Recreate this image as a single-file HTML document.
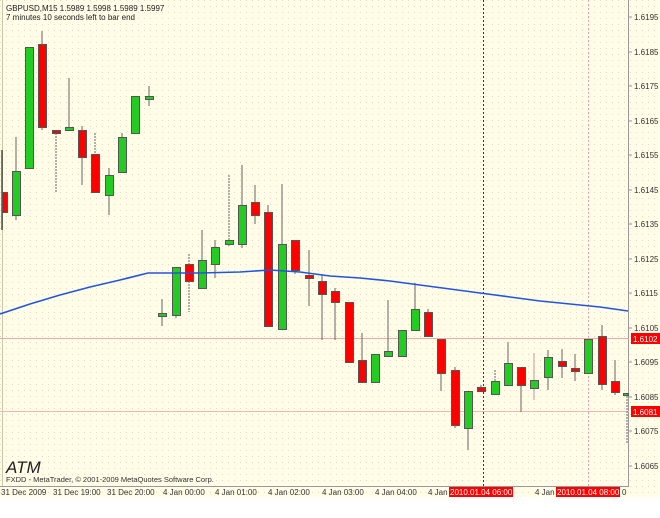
<!DOCTYPE html>
<html><head><meta charset="utf-8"><style>
body{margin:0;width:660px;height:513px;background:#fff;overflow:hidden;font-family:"Liberation Sans",sans-serif}
</style></head><body>
<svg width="660" height="513" xmlns="http://www.w3.org/2000/svg" font-family="Liberation Sans, sans-serif">
<defs><pattern id="dots" width="6" height="6" patternUnits="userSpaceOnUse"><rect width="6" height="6" fill="#fffce8"/><rect x="0" y="0" width="1" height="1" fill="#e8d8c0"/></pattern></defs>
<rect x="0" y="0" width="660" height="497" fill="url(#dots)"/>
<line x1="2.5" y1="0" x2="2.5" y2="486" stroke="#c8c8a8"/>
<line x1="628.5" y1="0" x2="628.5" y2="486" stroke="#999"/>
<line x1="0" y1="486.5" x2="629" y2="486.5" stroke="#999"/>
<!-- horizontal levels -->
<line x1="0" y1="338.5" x2="629" y2="338.5" stroke="#f0a8a8"/>
<line x1="0" y1="411.5" x2="629" y2="411.5" stroke="#f0b8b8"/>
<line x1="483.5" y1="0" x2="483.5" y2="486" stroke="#333" stroke-dasharray="2,2"/>
<line x1="588.5" y1="0" x2="588.5" y2="486" stroke="#f0a0b0" stroke-dasharray="2,2"/>
<g stroke="#666" stroke-width="1">
<line x1="2" y1="150" x2="2" y2="230" stroke="#000"/>
<line x1="16" y1="137" x2="16" y2="220"/><line x1="42" y1="31" x2="42" y2="130"/>
<line x1="56" y1="130" x2="56" y2="192" stroke-dasharray="2,1"/><line x1="69" y1="78" x2="69" y2="130"/>
<line x1="82" y1="126" x2="82" y2="185"/><line x1="95" y1="133" x2="95" y2="192" stroke-dasharray="2,1"/>
<line x1="109" y1="168" x2="109" y2="215"/><line x1="122" y1="133" x2="122" y2="172"/>
<line x1="149" y1="86" x2="149" y2="106"/>
<line x1="162" y1="299" x2="162" y2="326"/><line x1="176" y1="267" x2="176" y2="318"/>
<line x1="189" y1="254" x2="189" y2="312" stroke-dasharray="2,1"/><line x1="202" y1="230" x2="202" y2="288"/>
<line x1="215" y1="240" x2="215" y2="278"/><line x1="229" y1="175" x2="229" y2="247" stroke-dasharray="2,1"/>
<line x1="242" y1="165" x2="242" y2="248"/><line x1="255" y1="185" x2="255" y2="224"/>
<line x1="268" y1="205" x2="268" y2="326"/><line x1="282" y1="184" x2="282" y2="329"/>
<line x1="295" y1="240" x2="295" y2="274"/><line x1="309" y1="250" x2="309" y2="306"/>
<line x1="322" y1="274" x2="322" y2="340"/><line x1="335" y1="288" x2="335" y2="340"/>
<line x1="349" y1="302" x2="349" y2="362"/><line x1="362" y1="333" x2="362" y2="382"/>
<line x1="375" y1="354" x2="375" y2="382"/><line x1="388" y1="300" x2="388" y2="356"/>
<line x1="402" y1="330" x2="402" y2="356"/><line x1="415" y1="283" x2="415" y2="330"/>
<line x1="428" y1="309" x2="428" y2="337"/><line x1="441" y1="339" x2="441" y2="391"/>
<line x1="455" y1="367" x2="455" y2="428"/><line x1="468" y1="391" x2="468" y2="450"/>
<line x1="481" y1="385" x2="481" y2="392"/><line x1="495" y1="370" x2="495" y2="394" stroke-dasharray="2,1"/>
<line x1="508" y1="342" x2="508" y2="385"/><line x1="521" y1="367" x2="521" y2="412"/>
<line x1="534" y1="353" x2="534" y2="400" stroke="#c99"/><line x1="548" y1="350" x2="548" y2="390"/>
<line x1="562" y1="349" x2="562" y2="378"/><line x1="575" y1="354" x2="575" y2="381"/>
<line x1="602" y1="325" x2="602" y2="390"/><line x1="615" y1="360" x2="615" y2="395"/>
<line x1="627" y1="393" x2="627" y2="443" stroke-dasharray="2,1"/>
</g>
<g stroke="#555" stroke-width="1">
<rect x="2.5" y="192.5" width="5" height="20" fill="#f00"/>
<rect x="12.5" y="171.5" width="8" height="44" fill="#22cc22"/>
<rect x="25.5" y="47.5" width="8" height="121" fill="#22cc22"/>
<rect x="38.5" y="44.5" width="8" height="83" fill="#f00"/>
<rect x="52.5" y="130.5" width="8" height="3" fill="#f00"/>
<rect x="65.5" y="127.5" width="8" height="3" fill="#22cc22"/>
<rect x="78.5" y="130.5" width="8" height="27" fill="#f00"/>
<rect x="91.5" y="154.5" width="8" height="38" fill="#f00"/>
<rect x="105.5" y="175.5" width="8" height="20" fill="#22cc22"/>
<rect x="118.5" y="137.5" width="8" height="35" fill="#22cc22"/>
<rect x="131.5" y="96.5" width="8" height="37" fill="#22cc22"/>
<rect x="145.5" y="96.5" width="8" height="3" fill="#22cc22"/>
<rect x="158.5" y="313.5" width="8" height="3" fill="#22cc22"/>
<rect x="172.5" y="267.5" width="8" height="48" fill="#22cc22"/>
<rect x="185.5" y="264.5" width="8" height="17" fill="#f00"/>
<rect x="198.5" y="260.5" width="8" height="28" fill="#22cc22"/>
<rect x="211.5" y="247.5" width="8" height="17" fill="#22cc22"/>
<rect x="225.5" y="240.5" width="8" height="4" fill="#22cc22"/>
<rect x="238.5" y="205.5" width="8" height="39" fill="#22cc22"/>
<rect x="251.5" y="202.5" width="8" height="13" fill="#f00"/>
<rect x="264.5" y="212.5" width="8" height="114" fill="#f00"/>
<rect x="278.5" y="244.5" width="8" height="85" fill="#22cc22"/>
<rect x="291.5" y="240.5" width="8" height="30" fill="#f00"/>
<rect x="305.5" y="275.5" width="8" height="3" fill="#f00"/>
<rect x="318.5" y="281.5" width="8" height="13" fill="#f00"/>
<rect x="331.5" y="291.5" width="8" height="11" fill="#f00"/>
<rect x="345.5" y="302.5" width="8" height="60" fill="#f00"/>
<rect x="358.5" y="360.5" width="8" height="22" fill="#f00"/>
<rect x="371.5" y="354.5" width="8" height="28" fill="#22cc22"/>
<rect x="384.5" y="351.5" width="8" height="5" fill="#22cc22"/>
<rect x="398.5" y="330.5" width="8" height="26" fill="#22cc22"/>
<rect x="411.5" y="309.5" width="8" height="21" fill="#22cc22"/>
<rect x="424.5" y="312.5" width="8" height="24" fill="#f00"/>
<rect x="437.5" y="339.5" width="8" height="34" fill="#f00"/>
<rect x="451.5" y="370.5" width="8" height="55" fill="#f00"/>
<rect x="464.5" y="391.5" width="8" height="37" fill="#22cc22"/>
<rect x="477.5" y="387.5" width="8" height="4" fill="#f00"/>
<rect x="491.5" y="381.5" width="8" height="13" fill="#22cc22"/>
<rect x="504.5" y="363.5" width="8" height="22" fill="#22cc22"/>
<rect x="517.5" y="367.5" width="8" height="18" fill="#f00"/>
<rect x="530.5" y="380.5" width="8" height="8" fill="#22cc22"/>
<rect x="544.5" y="357.5" width="8" height="20" fill="#22cc22"/>
<rect x="558.5" y="361.5" width="8" height="5" fill="#f00"/>
<rect x="571.5" y="368.5" width="8" height="3" fill="#f00"/>
<rect x="584.5" y="339.5" width="8" height="34" fill="#22cc22"/>
<rect x="598.5" y="336.5" width="8" height="48" fill="#f00"/>
<rect x="611.5" y="381.5" width="8" height="11" fill="#f00"/>
<rect x="623.5" y="393.5" width="5" height="2" fill="#22cc22"/>
</g>
<polyline fill="none" stroke="#2255dd" stroke-width="1.6" points="0,314 30,304 60,295 90,287 120,280 148,273 200,273 240,272 270,270 300,272 330,276 360,278 390,281 420,285 450,289 480,293 510,297 540,301 570,304 600,307 628,311"/>
<!-- right axis -->
<g font-size="8" fill="#333">
<text x="634" y="20">1.6195</text><text x="634" y="55">1.6185</text><text x="634" y="89">1.6175</text>
<text x="634" y="124">1.6165</text><text x="634" y="158">1.6155</text><text x="634" y="193">1.6145</text>
<text x="634" y="227">1.6135</text><text x="634" y="262">1.6125</text><text x="634" y="296">1.6115</text>
<text x="634" y="331">1.6105</text><text x="634" y="365">1.6095</text><text x="634" y="400">1.6085</text>
<text x="634" y="434">1.6075</text><text x="634" y="469">1.6065</text>
</g>
<g stroke="#999"><line x1="629" y1="17" x2="632" y2="17"/><line x1="629" y1="52" x2="632" y2="52"/><line x1="629" y1="86" x2="632" y2="86"/><line x1="629" y1="121" x2="632" y2="121"/><line x1="629" y1="155" x2="632" y2="155"/><line x1="629" y1="190" x2="632" y2="190"/><line x1="629" y1="224" x2="632" y2="224"/><line x1="629" y1="259" x2="632" y2="259"/><line x1="629" y1="293" x2="632" y2="293"/><line x1="629" y1="328" x2="632" y2="328"/><line x1="629" y1="362" x2="632" y2="362"/><line x1="629" y1="397" x2="632" y2="397"/><line x1="629" y1="431" x2="632" y2="431"/><line x1="629" y1="466" x2="632" y2="466"/></g>
<rect x="631" y="333" width="29" height="11" fill="#f00"/><text x="633" y="342" font-size="8" fill="#fff">1.6102</text>
<rect x="631" y="406" width="29" height="11" fill="#f00"/><text x="633" y="415" font-size="8" fill="#fff">1.6081</text>
<!-- bottom axis -->
<g font-size="8" fill="#333">
<text x="1" y="495">31 Dec 2009</text><text x="53" y="495">31 Dec 19:00</text><text x="107" y="495">31 Dec 20:00</text>
<text x="163" y="495">4 Jan 00:00</text><text x="215" y="495">4 Jan 01:00</text><text x="268" y="495">4 Jan 02:00</text>
<text x="322" y="495">4 Jan 03:00</text><text x="375" y="495">4 Jan 04:00</text><text x="428" y="495">4 Jan</text>
<text x="535" y="495">4 Jan</text><text x="622" y="495">0</text>
</g>
<rect x="449" y="487" width="64" height="10" fill="#f00"/><text x="450" y="495" font-size="8" fill="#fff">2010.01.04 06:00</text>
<rect x="556" y="487" width="64" height="10" fill="#f00"/><text x="557" y="495" font-size="8" fill="#fff">2010.01.04 08:00</text>
<!-- titles -->
<text x="6" y="11" font-size="8" fill="#222">GBPUSD,M15  1.5989 1.5998 1.5989 1.5997</text>
<text x="6" y="20" font-size="8" fill="#222">7 minutes 10 seconds left to bar end</text>
<text x="6" y="473" font-size="17" font-style="italic" fill="#222">ATM</text>
<text x="6" y="482" font-size="7.5" fill="#333">FXDD - MetaTrader, © 2001-2009 MetaQuotes Software Corp.</text>
</svg>
</body></html>
